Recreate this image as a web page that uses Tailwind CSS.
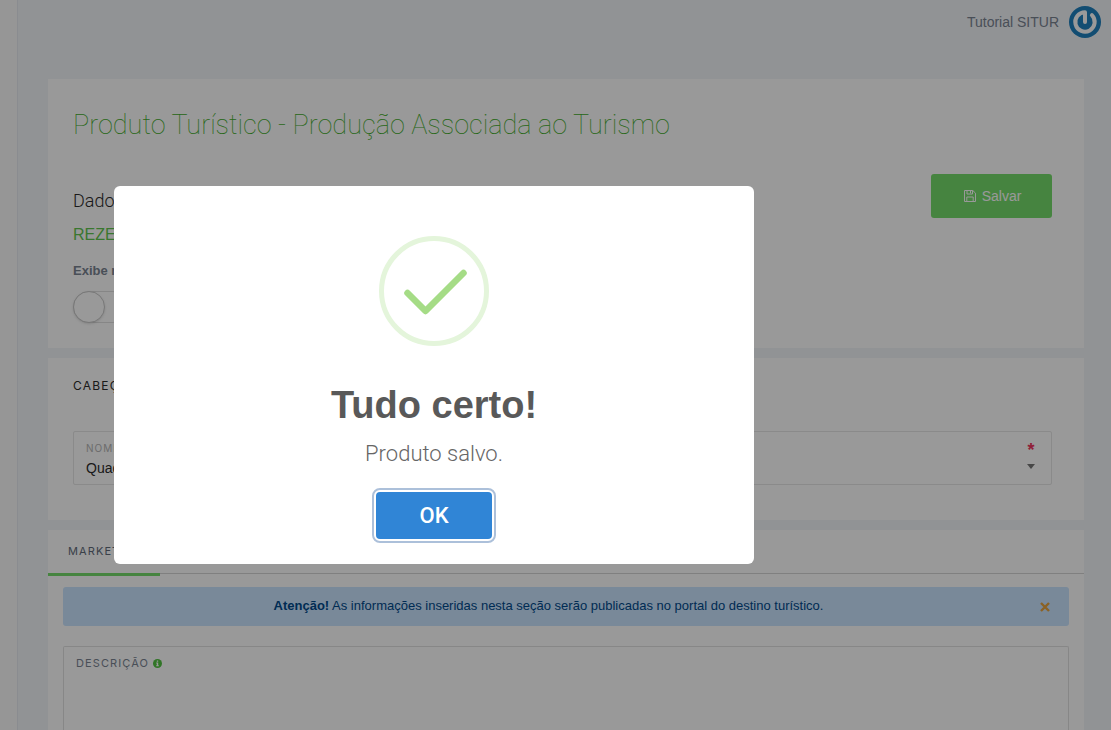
<!DOCTYPE html>
<html lang="pt-BR">
<head>
<meta charset="utf-8">
<title>Produto Turístico</title>
<script src="https://cdn.jsdelivr.net/npm/@tailwindcss/browser@4"></script>
</head>
<body class="h-screen overflow-hidden bg-[#f2f5f9] font-['Liberation_Sans',sans-serif] text-sm text-[#2c2c2c]">
<div class="flex h-screen overflow-hidden">
  <aside class="w-[18px] shrink-0 border-r border-[#e6eaf0] bg-[#fbfbfb]"></aside>
  <div class="flex min-w-0 flex-1 flex-col">
    <header class="flex h-11 shrink-0 items-center justify-end gap-2.5 pr-2.5">
      <span class="text-sm text-[#7a8492]">Tutorial SITUR</span>
      <svg class="size-8" viewBox="0 0 32 32" role="img" aria-label="Perfil">
        <circle cx="16" cy="16" r="16" fill="#1e80be"/>
        <path d="M16 16V6.300A9.700 9.700 0 1 0 22.900 9.200" fill="none" stroke="#fff" stroke-width="4" stroke-linecap="round" stroke-linejoin="round"/>
      </svg>
    </header>
    <main class="flex min-h-0 flex-1 flex-col gap-2.5 pt-[35px] pr-[27px] pl-[30px]">
      <section class="shrink-0 bg-white px-[25px] pt-7 pb-[25px]">
        <h1 class="font-['Roboto',sans-serif] text-[27px] leading-9 font-thin text-[#3fae2a]">Produto Turístico - Produção Associada ao Turismo</h1>
        <div class="mt-[31px] flex items-start justify-between pr-[7px]">
          <div>
            <h2 class="pt-[13px] font-['Roboto',sans-serif] text-lg leading-7 font-light">Dados gerais</h2>
            <p class="mt-2 text-base leading-6 text-[#5fc64f]">REZENDE</p>
            <p class="mt-3 text-[13px] leading-6 font-bold text-[#7a8492]" id="exibe">Exibe no portal</p>
            <button type="button" role="switch" aria-checked="false" aria-labelledby="exibe" class="mt-2 flex h-8 w-14 rounded-full border border-[#dfdfdf] bg-white"><span class="-mt-px -ml-px size-8 rounded-full border border-[#c8c8c8] bg-white shadow"></span></button>
          </div>
          <button type="button" class="flex h-11 w-[121px] items-center justify-center gap-1.5 rounded-[3px] bg-[#76dc6b] pl-0.5 text-sm text-white">
            <svg class="size-3" viewBox="0 0 12 12" fill="none" stroke="currentColor"><path d="M.5.5h8.300l2.700 2.700v8.300H.5zM3 .5V4h5.500V.5M6.500 1v2.200M2.800 11.300V7h6.400v4.300"/></svg>
            Salvar
          </button>
        </div>
      </section>
      <section class="shrink-0 bg-white px-[25px] pt-[18px] pb-[35px]">
        <h3 class="font-['Inter',sans-serif] text-xs leading-5 tracking-widest">CABEÇALHO</h3>
        <div class="mt-[35px] mr-[7px] flex h-[54px] items-stretch justify-between rounded-xs border border-[#e6e6e6] px-3">
          <div class="flex-1 pt-2.5">
            <label for="nome" class="block font-['Inter',sans-serif] text-[10px] leading-3 tracking-widest text-[#b4b4b4]">NOME DO PRODUTO</label>
            <select id="nome" class="mt-1 block w-full appearance-none bg-transparent text-sm leading-5 outline-none"><option>Quadro artesanal</option></select>
          </div>
          <div class="flex w-4 flex-col items-center pt-1.5">
            <span class="mb-0.5 text-lg leading-6 font-bold text-[#f0355e]">*</span>
            <svg class="h-[5px] w-2" viewBox="0 0 8 5" fill="#777"><path d="M0 0h8L4 5z"/></svg>
          </div>
        </div>
      </section>
      <section class="flex min-h-0 flex-1 flex-col bg-white">
        <nav class="flex h-11 shrink-0 border-b border-[#d6d6d6] font-['Inter',sans-serif]">
          <a href="#marketing" class="flex h-[46px] w-28 shrink-0 items-center border-b-3 border-[#76dc6b] pl-5 text-[11px] tracking-widest text-[#626c7a]">MARKETING</a>
        </nav>
        <div class="flex min-h-0 flex-1 flex-col px-[15px] pt-[13px]">
          <div class="flex h-[39px] shrink-0 items-center rounded-[3px] bg-[#cae4ff] pr-[19px] text-[#00529b]">
            <p class="flex-1 pr-1.5 text-center text-[13px] text-[#004a8c]"><b>Atenção!</b> As informações inseridas nesta seção serão publicadas no portal do destino turístico.</p>
            <button type="button" aria-label="Fechar" class="text-[#e8a33d]"><svg class="size-[10px]" viewBox="0 0 10 10" fill="none" stroke="currentColor" stroke-width="2.400"><path d="M1 1l8 8M9 1L1 9"/></svg></button>
          </div>
          <div class="mt-5 flex min-h-0 flex-1 flex-col rounded-t-xs border border-b-0 border-[#e2e2e2] px-3 pt-2.5">
            <label for="descricao" class="flex items-center gap-1 font-['Inter',sans-serif] text-[11px] leading-3 tracking-widest text-[#7a8492]">DESCRIÇÃO
              <svg class="size-[9px]" viewBox="0 0 9 9"><circle cx="4.500" cy="4.500" r="4.500" fill="#52c441"/><path d="M3.800 1.500h1.400v1.200H3.800zM3.200 3.500h2v2.800h.6v1H3.200v-1h.6V4.500h-.6z" fill="#fff"/></svg>
            </label>
            <textarea id="descricao" class="block min-h-0 w-full flex-1 resize-none outline-none"></textarea>
          </div>
        </div>
      </section>
    </main>
  </div>
</div>
<div class="fixed inset-0 bg-black/40"></div>
<div role="dialog" aria-modal="true" aria-labelledby="titulo" class="absolute top-[186px] left-[114px] flex w-[640px] flex-col items-center rounded-[6px] bg-white pt-[50px] pb-[25px]">
  <svg class="size-[110px]" viewBox="0 0 110 110" fill="none"><circle cx="55" cy="55" r="52.500" stroke="#e4f5db" stroke-width="5"/><path d="M28.500 57L46.500 75L84.500 37" stroke="#a5dc86" stroke-width="6.500" stroke-linecap="round" stroke-linejoin="round"/></svg>
  <h2 id="titulo" class="mt-9 text-[38px] leading-[46px] font-bold text-[#595959]">Tudo certo!</h2>
  <p class="mt-2.5 font-['Roboto',sans-serif] text-[22px] leading-8 font-light text-[#666]">Produto salvo.</p>
  <button type="button" class="mt-[22px] h-[47px] w-[116px] rounded-[4px] bg-[#3085d6] font-['Roboto',sans-serif] text-[22px] font-medium text-white outline-2 outline-offset-2 outline-[#acc0da]">OK</button>
</div>
</body>
</html>
